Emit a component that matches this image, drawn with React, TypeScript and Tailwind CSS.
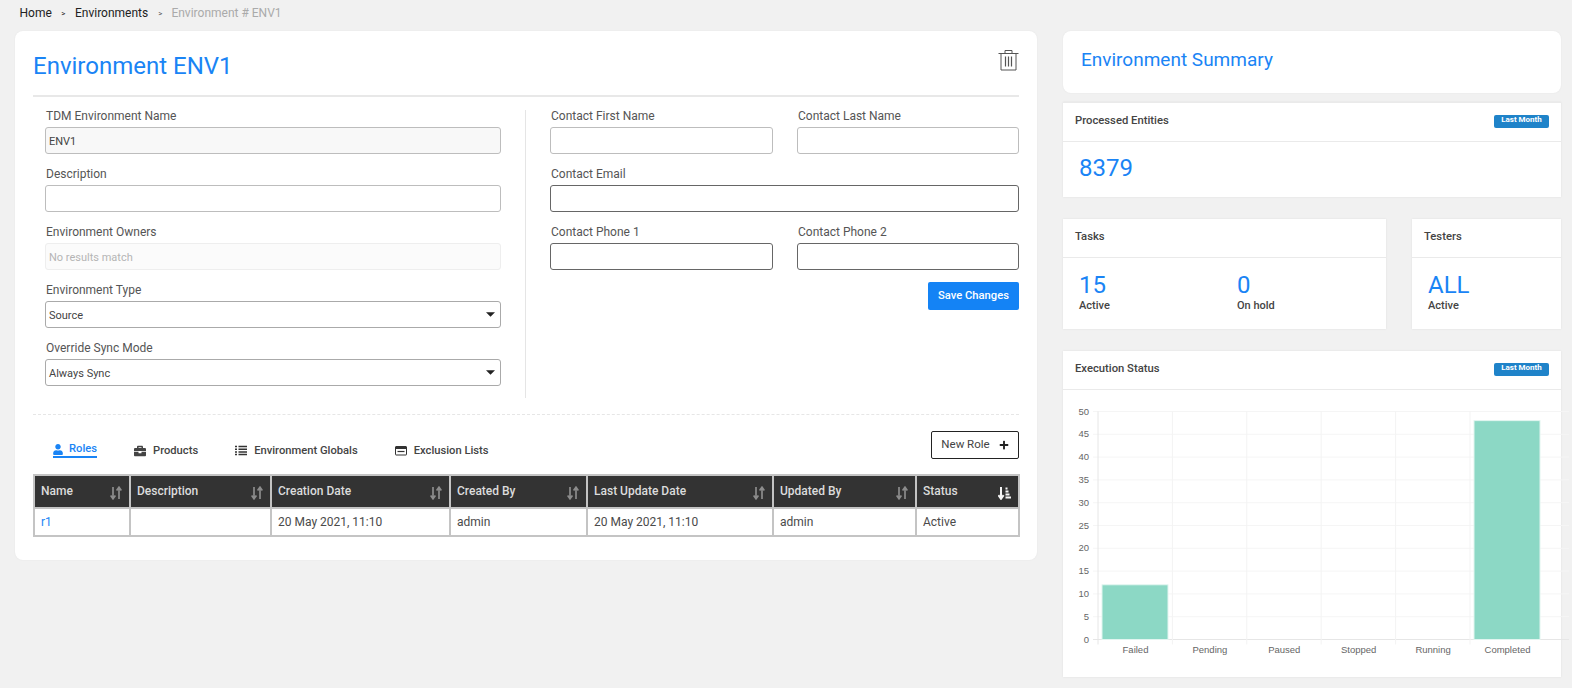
import { FaBriefcase, FaPlus, FaUser } from 'react-icons/fa';

const BLUE = 'text-[#1a84f5]';

function SortIcon() {
  return (
    <svg width="12" height="14" viewBox="0 0 12 14" fill="none" stroke="#8c8c8c" strokeWidth="1.7" className="absolute right-[7px] top-[10px]">
      <path d="M3 1v11.5M0.6 9.5L3 12.8l2.4-3.3" />
      <path d="M9 13V1.5M6.6 4.5L9 1.2l2.4 3.3" />
    </svg>
  );
}

function SortedIcon() {
  return (
    <svg width="13" height="14" viewBox="0 0 13 14" fill="none" stroke="#f5f5f5" className="absolute right-[7px] top-[10px]">
      <path d="M3 1v11.5M0.4 9.2L3 12.8l2.6-3.6" strokeWidth="2" />
      <path d="M7.5 2.5h2M7.5 5.5h3M7.5 8.5h4M7.5 11.5h5.5" strokeWidth="1.8" />
    </svg>
  );
}

function TrashIcon() {
  return (
    <svg width="21" height="22" viewBox="0 0 21 22" fill="none" stroke="#555" strokeWidth="1" className="mt-[18px]">
      <path d="M0.5 4.5h20M7 4.5V1.5h7v3M3 4.5v16.5h15V4.5" />
      <path d="M7.5 7.5v10M10.5 7.5v10M13.5 7.5v10" strokeWidth="1.2" />
    </svg>
  );
}

function ListIcon() {
  return (
    <svg width="12" height="11" viewBox="0 0 12 11" fill="none" stroke="#333" strokeWidth="1.5">
      <path d="M0 1.5h2M3.5 1.5H12M0 4.2h2M3.5 4.2H12M0 6.9h2M3.5 6.9H12M0 9.6h2M3.5 9.6H12" />
    </svg>
  );
}

function WindowIcon() {
  return (
    <svg width="12" height="11" viewBox="0 0 12 11" fill="none" stroke="#333">
      <rect x="0.5" y="1.5" width="11" height="8.5" rx="0.5" />
      <path d="M0.5 3h11" strokeWidth="2" />
      <path d="M2.5 6.5h7" strokeWidth="1.2" />
    </svg>
  );
}

function Field({ label, value, dark, disabled, className }: { label: string; value?: string; dark?: boolean; disabled?: boolean; className?: string }) {
  return (
    <div className={className}>
      <label className="block h-[17px] pl-[1px] text-xs leading-[13px] text-[#555]">{label}</label>
      <input
        readOnly
        defaultValue={value}
        className={`block h-[27px] w-full rounded-[3px] border px-[3px] pt-[1px] text-[11px] text-[#444] outline-none ${dark ? 'border-[#666]' : 'border-[#bdbdbd]'} ${disabled ? 'bg-[#f8f8f8]' : 'bg-white'}`}
      />
    </div>
  );
}

function SelectField({ label, value }: { label: string; value: string }) {
  return (
    <div>
      <label className="block h-[17px] pl-[1px] text-xs leading-[13px] text-[#555]">{label}</label>
      <div className="flex h-[27px] items-center justify-between rounded-[3px] border border-[#aaa] bg-white pl-[3px] pr-[5px] text-[11px] text-[#444]">
        <span className="pt-1">{value}</span>
        <svg width="9" height="5" viewBox="0 0 10 5"><path d="M0 0h10L5 5z" fill="#222" /></svg>
      </div>
    </div>
  );
}

function Badge() {
  return (
    <span className="flex h-[13px] w-[55px] items-start justify-center rounded-[2px] bg-[#1f83c9] text-[8px] font-bold leading-[10px] text-white">
      Last Month
    </span>
  );
}

function StatHead({ title, badge }: { title: string; badge?: boolean }) {
  return (
    <div className="flex h-[39px] items-center justify-between border-b border-[#eaeaea] px-3 pb-[2px] text-[#444]">
      <span className="text-[11.25px] font-medium">{title}</span>
      {badge && <Badge />}
    </div>
  );
}

function Stat({ value, label, className }: { value: string; label: string; className?: string }) {
  return (
    <div className={className}>
      <div className={`text-2xl leading-[28px] ${BLUE}`}>{value}</div>
      <div className="text-[11px] font-medium leading-[14px] text-[#444]">{label}</div>
    </div>
  );
}

const tableHead = ['Name', 'Description', 'Creation Date', 'Created By', 'Last Update Date', 'Updated By', 'Status'];
const colWidths = ['w-[96px]', 'w-[141px]', 'w-[179px]', 'w-[137px]', 'w-[186px]', 'w-[143px]', 'w-[103px]'];
const row = ['r1', '', '20 May 2021, 11:10', 'admin', '20 May 2021, 11:10', 'admin', 'Active'];

function ExecutionChart() {
  const labels = ['Failed', 'Pending', 'Paused', 'Stopped', 'Running', 'Completed'];
  const values = [12, 0, 0, 0, 0, 48];
  const left = 35;
  const step = 74.4;
  const y0 = 249.5;
  const unit = 4.56;
  const right = 506;
  const ticks = [0, 5, 10, 15, 20, 25, 30, 35, 40, 45, 50];

  return (
    <svg width="509" height="287" className="block overflow-visible" fontFamily="'Liberation Sans', sans-serif" fontSize="9.5" fill="#666">
      {ticks.map((t) => {
        const y = y0 - t * unit;
        return (
          <g key={t}>
            <line x1={left - 5} x2={right} y1={y} y2={y} stroke={t === 0 ? '#e6e6e6' : '#f5f5f5'} />
            <text x={26} y={y + 3} textAnchor="end">{t}</text>
          </g>
        );
      })}
      {[0, 1, 2, 3, 4, 5].map((i) => (
        <line key={i} x1={left + i * step} x2={left + i * step} y1={y0 - 50 * unit} y2={y0 + 5} stroke={i === 0 ? '#e6e6e6' : '#f3f3f3'} />
      ))}
      {values.map((v, i) =>
        v > 0 ? (
          <rect key={i} x={left + i * step + 4} y={y0 - v * unit} width={66} height={v * unit} fill="#8cd8c5" stroke="#e2f5f0" />
        ) : null,
      )}
      {labels.map((l, i) => (
        <text key={l} x={left + i * step + 37.5} y={y0 + 13} textAnchor="middle">{l}</text>
      ))}
    </svg>
  );
}

export default function App() {
  return (
    <div className="h-[688px] overflow-hidden bg-[#f1f1f1] font-[Roboto,sans-serif]">
      {/* Breadcrumb */}
      <div className="flex h-[31px] items-start pl-[19.5px] pt-[6px] text-xs leading-[15px] text-[#222]">
        <span>Home</span>
        <span className="mx-[9.5px] text-[8px]">&gt;</span>
        <span>Environments</span>
        <span className="ml-[10px] mr-[9px] text-[8px] text-[#555]">&gt;</span>
        <span className="text-[#aaa]">Environment # ENV1</span>
      </div>

      <div className="flex items-start gap-[26px] pl-[15px]">
        {/* Main card */}
        <div className="w-[1022px] rounded-lg bg-white px-[18px] pb-[23px] shadow-[0_0_2px_rgba(0,0,0,0.06)]">
          <div className="flex h-[66px] items-start justify-between border-b-2 border-[#e8e8e8]">
            <h1 className={`pt-[20px] text-2xl leading-[30px] ${BLUE}`}>Environment ENV1</h1>
            <TrashIcon />
          </div>

          <div className="mt-[13px] flex h-[288px]">
            <div className="flex w-[493px] flex-col gap-[14px] border-r border-[#e5e5e5] pl-3 pr-6">
              <Field label="TDM Environment Name" value="ENV1" disabled />
              <Field label="Description" />
              <div>
                <label className="block h-[17px] pl-[1px] text-xs leading-[13px] text-[#555]">Environment Owners</label>
                <div className="flex h-[27px] items-center rounded-[3px] border border-[#eee] bg-[#fbfbfb] pl-[3px] pt-[3px] text-[11px] text-[#b5b5b5]">No results match</div>
              </div>
              <SelectField label="Environment Type" value="Source" />
              <SelectField label="Override Sync Mode" value="Always Sync" />
            </div>
            <div className="flex-1 pl-6">
              <div className="grid grid-cols-[223px_222px] justify-between gap-y-[14px]">
                <Field label="Contact First Name" />
                <Field label="Contact Last Name" />
                <Field label="Contact Email" dark className="col-span-2" />
                <Field label="Contact Phone 1" dark />
                <Field label="Contact Phone 2" dark />
              </div>
              <div className="mt-3 flex justify-end">
                <button className="h-[28px] w-[91px] rounded-[2px] bg-[#1483f5] text-[11.2px] font-medium text-white">Save Changes</button>
              </div>
            </div>
          </div>

          <div className="mt-[16px] border-t border-dashed border-[#e6e6e6]" />

          {/* Tabs */}
          <div className="mt-[16px] flex h-[28px] items-center justify-between">
            <div className="flex items-center pl-5 text-[11.2px] font-medium text-[#444]">
              <div className={`flex h-[20px] w-[44px] translate-y-[3px] items-end gap-[6px] border-b-2 border-[#1a84f5] ${BLUE}`}>
                <FaUser className="mb-[1px] h-[11px] w-[10px] shrink-0" />
                <span className="leading-[14px]">Roles</span>
              </div>
              <div className="ml-[37px] flex translate-y-[6px] items-center gap-[7px]">
                <FaBriefcase className="h-[12px] w-[12px]" />
                <span>Products</span>
              </div>
              <div className="ml-[37px] flex translate-y-[6px] items-center gap-[7px]">
                <ListIcon />
                <span>Environment Globals</span>
              </div>
              <div className="ml-[37px] flex translate-y-[6px] items-center gap-[7px]">
                <WindowIcon />
                <span>Exclusion Lists</span>
              </div>
            </div>
            <button className="flex h-[28px] w-[88px] items-center justify-center gap-[9px] rounded-[2px] border border-[#222] bg-white text-[11.5px] text-[#444]">
              New Role
              <FaPlus className="h-[10px] w-[10px] text-[#222]" />
            </button>
          </div>

          {/* Roles table */}
          <table className="mt-[15px] w-[985px] table-fixed border-collapse border-2 border-[#c9c9c9] text-xs">
            <thead>
              <tr className="h-[33px] bg-[#333]">
                {tableHead.map((h, i) => (
                  <th key={h} className={`relative border-2 border-[#c4c4c4] px-[6px] pb-[2px] text-left font-medium text-[#dcdcdc] ${colWidths[i]}`}>
                    {h}
                    {h === 'Status' ? <SortedIcon /> : <SortIcon />}
                  </th>
                ))}
              </tr>
            </thead>
            <tbody>
              <tr className="h-[28px] bg-white">
                {row.map((c, i) => (
                  <td key={i} className={`border-2 border-[#c4c4c4] px-[6px] ${i === 0 ? BLUE : 'text-[#4a4a4a]'}`}>{c}</td>
                ))}
              </tr>
            </tbody>
          </table>
        </div>

        {/* Summary column */}
        <div className="w-[498px]">
          <div className="flex h-[62px] items-center rounded-lg bg-white pb-1 pl-[18px] shadow-[0_0_2px_rgba(0,0,0,0.06)]">
            <h2 className={`text-[19px] ${BLUE}`}>Environment Summary</h2>
          </div>

          <div className="mt-[9px] h-[95px] border-t border-[#eaeaea] bg-white shadow-[0_0_2px_rgba(0,0,0,0.08)]">
            <StatHead title="Processed Entities" badge />
            <div className={`pl-4 pt-[11px] text-2xl leading-[30px] ${BLUE}`}>8379</div>
          </div>

          <div className="mt-[22px] flex justify-between">
            <div className="h-[110px] w-[323px] bg-white shadow-[0_0_2px_rgba(0,0,0,0.08)]">
              <StatHead title="Tasks" />
              <div className="flex pl-4 pt-[13px]">
                <Stat value="15" label="Active" className="w-[158px]" />
                <Stat value="0" label="On hold" />
              </div>
            </div>
            <div className="h-[110px] w-[149px] bg-white shadow-[0_0_2px_rgba(0,0,0,0.08)]">
              <StatHead title="Testers" />
              <div className="pl-4 pt-[13px]">
                <Stat value="ALL" label="Active" />
              </div>
            </div>
          </div>

          <div className="mt-[22px] h-[326px] bg-white shadow-[0_0_2px_rgba(0,0,0,0.08)]">
            <StatHead title="Execution Status" badge />
            <ExecutionChart />
          </div>
        </div>
      </div>
    </div>
  );
}
